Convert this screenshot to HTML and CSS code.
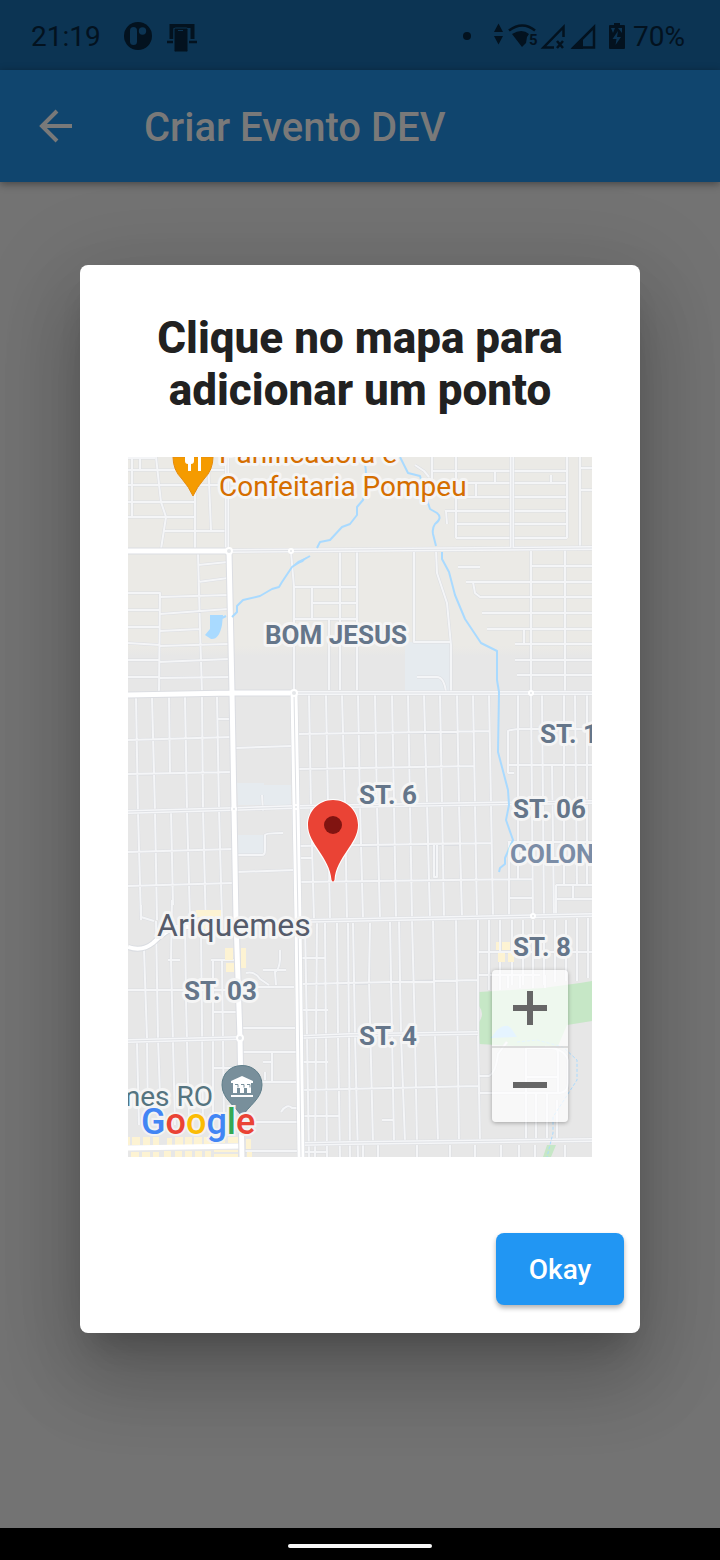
FILE: index.html
```html
<!DOCTYPE html>
<html lang="pt-BR">
<head>
<meta charset="utf-8">
<meta name="viewport" content="width=device-width, initial-scale=1">
<title>Criar Evento DEV</title>
<link rel="stylesheet" href="styles.css">
</head>
<body>
<header class="status">
  <time class="status-text">21:19</time>
  <svg class="status-left" width="76" height="32" viewBox="122 20 76 32" aria-hidden="true">
    <circle cx="138" cy="35" r="14" fill="#03121f"/>
    <rect x="130" y="26" width="7" height="18" rx="3.5" fill="#0c3453"/>
    <circle cx="142.500" cy="30" r="3.700" fill="#0c3453"/>
    <path d="M171.500 38V25h21v13" fill="none" stroke="#03121f" stroke-width="4"/>
    <path d="M167 41h6m16 0h8" stroke="#03121f" stroke-width="2.500"/>
    <rect x="174" y="27" width="14" height="24" rx="1.500" fill="#03121f" stroke="#0c3453"/>
    <path d="M178 29.500h5" stroke="#0c3453"/>
  </svg>
  <span class="status-space"></span>
  <svg width="166" height="32" viewBox="461 20 166 32" aria-hidden="true">
    <g fill="#03121f">
      <circle cx="467" cy="35" r="4"/>
      <path d="M494 31l4.500-8.500L503 31zM494 35h9l-4.500 8.500zM512 33q10-6 17 0l-2 3-1 6-4 4z"/>
      <path d="M509 29.500q13.500-10 26 0" fill="none" stroke="#03121f" stroke-width="2.500"/>
      <text x="529" y="44" class="wifi-number">5</text>
      <path d="M563.500 36V26L543.500 46.500H554" fill="none" stroke="#03121f" stroke-width="2.500"/>
      <path d="M557 40l6 7m0-7l-6 7" stroke="#03121f" stroke-width="2.500"/>
      <path d="M594 26v20.500h-20.500z" fill="none" stroke="#03121f" stroke-width="2.500"/>
      <path d="M571 48l12-12v12z"/>
      <path d="M610 24h4v-2h6v2h4q1 0 1 1v22q0 1-1 1h-14q-1 0-1-1V25q0-1 1-1z"/>
    </g>
    <path d="M618 30l-5.500 8h4l-1 6 5.500-8h-4zM611 27h4l-2 5M618 27h4v5" fill="#0c3453"/>
  </svg>
  <span class="status-text battery">70%</span>
</header>
<div class="appbar">
  <button class="back" type="button" aria-label="Voltar">
    <svg width="36" height="36" viewBox="0 0 36 36" aria-hidden="true"><path d="M34 18H5M19 3L4 18l15 15" fill="none" stroke="currentColor" stroke-width="4"/></svg>
  </button>
  <h1 class="appbar-title">Criar Evento DEV</h1>
</div>
<main class="page">
  <section class="dialog" role="dialog" aria-labelledby="dialog-title">
    <h2 class="dialog-title" id="dialog-title">Clique no mapa para adicionar um ponto</h2>
    <div class="map">
      <svg class="map-canvas" viewBox="128 457 464 700" preserveAspectRatio="xMidYMid slice" role="img" aria-label="Mapa de Ariquemes">
        <defs>
          <linearGradient id="land" x1="0" y1="0" x2="0" y2="1">
            <stop offset=".27" stop-color="#ebeae6"/><stop offset=".285" stop-color="#e7e7e7"/>
          </linearGradient>
          <path id="streets" d="
            M132 457V517M156 457L161 502 166 517 161 549M195 490V549M208 457L211 530M140 457V469M128 458H155M128 470H226M128 485H226M128 502H195M128 517H195M163 531H226
            M198 553L200 629 202 693M128 593H160L159 690 158 693M128 610H160M128 627H160M128 643L160 645M128 660H159M128 677H159
            M160 597L228 595M160 614L228 609M160 631L200 629M160 646L228 644M159 662L229 659M159 678L230 677M198 565L228 562M198 582L228 578
            M291 552L294 587V690M312 587V620M340 552L340 690M357 550V690M329 620V690M294 587H357M312 603H357M294 619H357
            M414 550V642H451M436 550L437 573 447 603 451 645V692M417 677H437Q444 677 446 692
            M432 457V480M456 457V538M567 457V538M580 457V547M580 468H592M580 490H592M495 471V483M476 483V498M551 475V483M432 471H567M456 483H567M456 497H567M445 511H567M456 524H567M456 538H567M415 465L424 471 429 477M446 511L447 524
            M531 549V693M565 549V693M531 566H592M458 567H480M466 582H592M473 582L475 593 480 597H592M482 613H592M487 629H592M515 644H592M515 660H592M517 675H592M524 629V644
            M136 697L138 812 141 920M152 697L155 811 157 920M169 697L170 774M185 697L187 810 190 920M202 697L203 810 206 930M217 697L219 809 222 920M171 811L173 905M217 719H232
            M128 740L232 737M128 774L232 772M128 852L233 849M128 886L233 883
            M236 748L292 746M263 811L262 795M236 855H262Q265 855 265 850V835Q266 833 283 833M237 872L294 870
            M309 695L311 807 314 920M326 695L328 807 330 920M342 695L345 806 347 920M358 695L360 805 363 919M375 695L377 805 380 919M392 695L394 804 396 918M408 695L410 804 412 918M424 695L427 804 430 918M440 695L442 804 444 918M457 695L459 804 462 918M473 695L475 804 477 917M489 695L491 804 493 917
            M299 734L490 731M299 769L474 766M299 846L491 843M299 882L532 879M434 845V877H437V845M299 858H312
            M518 695V880M531 695L533 917M542 695L544 917M552 765L554 917M564 695V885M575 695L577 885M587 695V885M508 773V731Q509 730 518 729H592M508 765H592M508 773H514M508 842H592M509 842V917H533M509 898H533M556 885V917M556 885H592M556 899H592M573 885V899
            M141 905V917L154 921M128 990H236M144 949L147 1038 148 1125M156 921L158 1038 161 1125M172 900L171 960 175 1125M185 920L186 1000 189 1125M201 930L203 1125M213 960V1125M222 960L224 1125M137 1043L139 1125M168 960H180M211 960H236M213 1012H239M214 1068H240
            M240 987H294M241 1028H295M242 1052H297M243 1082H297M244 1122H298M244 1151H298M272 1052V1082M263 1062H272M265 1072V1080
            M246 973Q255 971 260 979L269 985M280 950V960Q279 970 275 972L276 985M263 970H286M281 1112Q287 1103 292 1108H297
            M305 923L307 1036 309 1157M317 923L316 1037 315 1157M325 923L327 1157M337 923L338 1036 340 1157M348 923L350 1157M353 923L355 1035 358 1157M370 923L369 980 373 1143M390 922L394 1142M399 920L401 1035 405 1142M412 920L415 1035 417 1142M433 920L435 1035 438 1142M456 920L459 1142M478 920V1035L480 1142
            M302 958H325M302 984L478 980M302 1010H328M302 1062H328M302 1090L478 1086M302 1116H340M382 1120H394
            M489 920V990M500 920V990M512 920V985M523 920V985M533 920V985M544 920V985M555 920V982M566 920V981M577 918V981M588 918V978M478 952H592M478 975H540M508 975V988M520 975V988M533 975V988M545 975V988
            M478 1093H560Q568 1092 568 1083V1060Q564 1048 545 1047M526 1048H555Q558 1049 558 1054V1093M526 1048V1142M526 1077H558M536 1093V1142M547 1093V1142M557 1100V1142M478 1076H489Q496 1072 498 1054L507 1042
            M363 1145V1157M378 1145V1157M417 1145V1157M450 1145V1157M475 1145V1157M501 1145V1157M519 1145V1157M535 1145V1157M565 1145V1157M300 1152H328"/>
          <path id="avenues" d="M227 457V549M229 551L350 550 592 548M512 457V548M294 693H592M128 812L234 809 294 807 350 806 592 802M300 921L350 920 592 915M128 1041L240 1038M299 1037L350 1035 478 1033M302 1144L350 1143 592 1140"/>
          <path id="main-roads" d="M128 551H229L232 693 234 808 236 920 240 1038 242 1157M128 695L232 693H294"/>
          <path id="highway" d="M294 693L296 807 298 920 301 1157"/>
          <path id="diagonal" d="M128 947Q142 952 153 943 166 930 177 927H196"/>
        </defs>
        <rect x="128" y="457" width="464" height="700" fill="url(#land)"/>
        <path d="M405 642h46v51h-46zM237 783h27v2h27v20h-53zM238 835h26v20h-26z" fill="#e6ebef"/>
        <path d="M479 992L543 988 580 983 592 981V1021L567 1025 558 1046H515L479 1044V1022Q485 1014 479 1006zM547 1145h9l-5 12h-8z" fill="#c6e7c6"/>
        <g class="line">
          <use href="#streets" class="street-edge"/>
          <use href="#streets" class="street"/>
        </g>
        <g fill="#fdf3d3">
          <path d="M196 910h25v7h-25zM202 920h12v9h-12zM225 948h8v12h-8zM226 963h8v9h-8zM241 948h5v20h-5zM496 942h3v8h-3zM502 942h8v8h-8zM498 953h7v9h-7zM508 953h6v9h-6z"/>
          <path d="M128 1137h2v8h-2zM132 1137h8v8h-8zM143 1137h7v8h-7zM153 1137h6v8h-6zM167 1138h5v8h-5zM175 1137h8v8h-8zM185 1137h7v8h-7zM194 1137h8v8h-8zM204 1137h7v7h-7zM214 1137h11v6h-11zM228 1137h10v6h-10zM131 1152h8v5h-8zM142 1152h8v5h-8zM153 1152h6v5h-6zM164 1151h7v6h-7zM175 1151h7v6h-7zM185 1151h7v6h-7zM195 1151h7v6h-7zM205 1151h6v6h-6zM214 1150h24v2h-24zM214 1154h24v3h-24zM246 1139h5v10h-5zM247 1152h5v5h-5z"/>
        </g>
        <g class="line">
          <use href="#avenues" stroke="#dddfe3" stroke-width="5"/>
          <use href="#avenues" stroke="#f5f6f8" stroke-width="4"/>
          <use href="#avenues" stroke="#dfe1e5" stroke-width="1"/>
          <use href="#diagonal" stroke="#d9dce1" stroke-width="6"/>
          <use href="#diagonal" stroke="#fff" stroke-width="4"/>
          <path d="M128 1148L242 1146" stroke="#fff" stroke-width="5"/>
          <use href="#main-roads" stroke="#dbdde2" stroke-width="7"/>
          <use href="#main-roads" stroke="#fff" stroke-width="5"/>
          <use href="#highway" stroke="#d8dbe0" stroke-width="8"/>
          <use href="#highway" stroke="#fff" stroke-width="7"/>
          <use href="#highway" stroke="#dee0e4" stroke-width="1"/>
        </g>
        <g class="junctions">
          <circle cx="229" cy="551" r="3"/><circle cx="291" cy="551" r="2"/><circle cx="294" cy="693" r="3"/><circle cx="234" cy="809" r="2"/><circle cx="296" cy="807" r="2"/><circle cx="531" cy="693" r="2"/><circle cx="533" cy="916" r="2"/><circle cx="240" cy="1038" r="3"/>
        </g>
        <g class="line" stroke="#a9daff" stroke-width="2">
          <path d="M365 464Q367 475 365 485L363 500 357 507V515L350 524 342 527 330 540 320 542 317 548M310 556L303 560 292 567 282 582 279 587 272 589 260 596 243 600 237 606V612L232 617M226 616L222 618"/>
          <path d="M400 457L408 473 420 476 427 500 430 509 437 513Q443 518 435 524 432 528 433 534L436 546M442 552V559L449 572 455 595 465 619 481 643 497 651V680L499 692 498 752 508 790 509 805 506 820 513 840 505 858V864L500 868 499 872"/>
          <path d="M517 1042L537 1040 563 1047 577 1060V1080L553 1117V1133L547 1157" stroke-width="1" stroke-dasharray="3 2"/>
        </g>
        <path d="M210 615H223L222 625 Q219 640 211 639L205 635 210 629zM291 567L298 561 307 557 303 562 294 565zM491 1038L497 1030Q508 1021 513 1031L517 1037z" fill="#a9daff"/>
        <g class="label">
          <g class="food"><text x="219" y="463">Panificadora e</text><text x="219" y="496">Confeitaria Pompeu</text></g>
          <g class="district">
            <text x="265" y="644">BOM JESUS</text><text x="359" y="804">ST. 6</text><text x="540" y="743">ST. 1</text><text x="513" y="818">ST. 06</text><text x="513" y="956">ST. 8</text><text x="184" y="1000">ST. 03</text><text x="359" y="1045">ST. 4</text>
            <text x="510" y="863" class="colony">COLONIAL</text>
          </g>
          <text x="157" y="936" class="city">Ariquemes</text>
          <text x="213" y="1106" class="museum">Ariquemes RO</text>
        </g>
        <path d="M173 457Q173 470 182 479 189 487 193 496 197 487 204 479 213 470 213 457z" fill="#f59b00" stroke="#e58b0e"/>
        <path d="M185 457v4q0 3 3 3v7h3v-7q3 0 3-3v-4zM198 457v14h3v-14z" fill="#fff"/>
        <path d="M242 1065.500C230 1065.500 222 1074 222 1085 222 1099 236 1106 242 1117 248 1106 262 1099 262 1085 262 1074 254 1065.500 242 1065.500z" fill="#788f9b" stroke="#5f7e8a"/>
        <path d="M231 1081l11-5 11 5v2h-22zM233 1083h18v5h-18zM233 1088h4v5h-4zM240 1088h4v5h-4zM247 1088h4v5h-4zM231 1095h22v2h-22z" fill="#fff"/>
        <path d="M235 1084.500h3v3m3-3h3v3m3-3h3v3" fill="none" stroke="#788f9b"/>
        <path d="M333 799C318 799 307 811 307 825 307 845 329 858 330.500 880Q333 884 335.500 880C337 858 359 845 359 825 359 811 348 799 333 799z" fill="#fff"/>
        <path d="M333 800C319 800 308 811 308 825 308 844 330 857 331.500 880Q333 883 334.500 880C336 857 358 844 358 825 358 811 347 800 333 800z" fill="#ea4335"/>
        <circle cx="333" cy="825" r="9" fill="#811411"/>
        <text x="141" y="1134" class="google"><tspan fill="#4285f4">G</tspan><tspan fill="#ea4335">o</tspan><tspan fill="#fbbc04">o</tspan><tspan fill="#4285f4">g</tspan><tspan fill="#34a853">l</tspan><tspan fill="#ea4335">e</tspan></text>
      </svg>
      <div class="zoom">
        <button class="zoom-button" type="button" aria-label="Aumentar zoom"><svg width="34" height="34" viewBox="0 0 34 34" aria-hidden="true"><path d="M0 17h34M17 0v34" stroke="#666" stroke-width="6"/></svg></button>
        <button class="zoom-button" type="button" aria-label="Diminuir zoom"><svg width="34" height="34" viewBox="0 0 34 34" aria-hidden="true"><path d="M0 17h34" stroke="#666" stroke-width="6"/></svg></button>
      </div>
    </div>
    <div class="actions"><button class="okay" type="button">Okay</button></div>
  </section>
</main>
<footer class="navigation"><span class="handle"></span></footer>
</body>
</html>
```
FILE: styles.css
```css
* { box-sizing: border-box; }
body {
  margin: 0;
  min-height: 100vh;
  display: flex;
  flex-direction: column;
  background: #737373;
  font-family: Roboto, "Liberation Sans", sans-serif;
}
button { border: 0; padding: 0; font: inherit; cursor: pointer; }
svg { display: block; }

.status {
  height: 70px;
  padding: 3px 35px 0 31px;
  display: flex;
  align-items: center;
  background: #0c3453;
  color: #03121f;
}
.status-text { font-size: 28px; line-height: 32px; }
.status-left { margin-left: 21px; }
.status-space { flex: 1; }
.battery { margin-left: 6px; }
.wifi-number { font-size: 15px; font-weight: 700; }

.appbar {
  height: 112px;
  padding: 4px 38px 0;
  display: flex;
  align-items: center;
  gap: 70px;
  background: #10456e;
  color: #797979;
  box-shadow: 0 2px 8px rgba(0, 0, 0, .4);
}
.back { margin-bottom: 4px; background: none; color: inherit; }
.appbar-title { margin: 0; font-size: 40px; line-height: 48px; font-weight: 500; }

.page {
  flex: 1;
  display: flex;
  flex-direction: column;
  justify-content: center;
  padding: 0 80px 112px;
}
.dialog {
  padding: 47px 48px 28px;
  background: #fff;
  border-radius: 8px;
  box-shadow: 0 22px 30px -14px rgba(0, 0, 0, .2), 0 48px 76px 6px rgba(0, 0, 0, .14), 0 18px 92px 16px rgba(0, 0, 0, .12);
}
.dialog-title {
  margin: 0 0 41px;
  color: #212121;
  font-size: 44px;
  line-height: 52px;
  font-weight: 800;
  text-align: center;
}
.map { position: relative; }
.map-canvas { width: 100%; height: auto; }
.line { fill: none; stroke-linejoin: round; }
.street-edge { stroke: #dcdee2; stroke-width: 3px; }
.street { stroke: #f4f5f7; stroke-width: 2px; }
.junctions { fill: #e4e6e9; stroke: #fff; stroke-width: 2px; }
.label text { paint-order: stroke; stroke: #f5f5f5; stroke-width: 6px; stroke-linejoin: round; }
.food { fill: #d56e00; font-size: 28px; }
.district { fill: #65768a; font-size: 26px; font-weight: 700; }
.colony { fill: #7a8ca6; }
.city { fill: #565c6b; font-size: 32px; }
.museum { fill: #557480; font-size: 28px; text-anchor: end; }
.google {
  font-size: 36px;
  font-weight: 500;
  paint-order: stroke;
  stroke: #f3f3f3;
  stroke-width: 4px;
}

.zoom {
  position: absolute;
  right: 24px;
  bottom: 35px;
  width: 76px;
  border-radius: 4px;
  background: rgba(255, 255, 255, .7);
  box-shadow: 0 1px 4px rgba(0, 0, 0, .3);
}
.zoom-button {
  width: 100%;
  height: 76px;
  display: grid;
  place-items: center;
  background: none;
}
.zoom-button + .zoom-button { border-top: 2px solid rgba(200, 200, 200, .6); }

.actions { display: flex; justify-content: flex-end; margin: 76px -32px 0 0; }
.okay {
  min-width: 128px;
  height: 72px;
  padding: 0 32px;
  border-radius: 8px;
  background: #2196f3;
  color: #fff;
  font-size: 28px;
  font-weight: 500;
  box-shadow: 0 3px 5px rgba(0, 0, 0, .3);
}

.navigation {
  height: 32px;
  padding-top: 4px;
  display: grid;
  place-items: center;
  background: #000;
}
.handle { width: 144px; height: 4px; border-radius: 2px; background: #f8f8f8; }
```
